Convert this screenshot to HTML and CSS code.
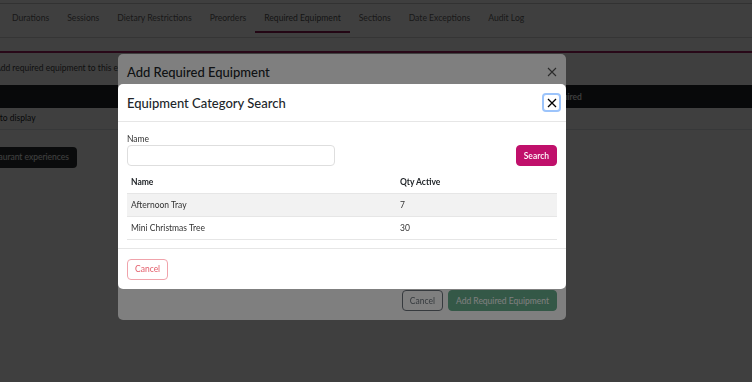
FILE: index.html
```html
<!DOCTYPE html>
<html lang="en">
<head>
  <meta charset="UTF-8" />
  <title>Required Equipment</title>
  <link rel="stylesheet" href="styles.css">
</head>
<body>

  <div class="page">
    <div class="topbar"></div>
    <nav class="tabs">
      <a class="tab">Durations</a>
      <a class="tab">Sessions</a>
      <a class="tab">Dietary Restrictions</a>
      <a class="tab">Preorders</a>
      <a class="tab active">Required Equipment</a>
      <a class="tab">Sections</a>
      <a class="tab">Date Exceptions</a>
      <a class="tab">Audit Log</a>
    </nav>

    <section class="panel">
      <p class="hint">Add required equipment to this event so the kitchen knows what to prepare.</p>
      <table class="list">
        <thead>
          <tr><th class="col-name">Name</th><th class="col-qty">Qty Required</th></tr>
        </thead>
        <tbody>
          <tr><td colspan="2">No data to display</td></tr>
        </tbody>
      </table>
      <button class="btn-dark">Copy from restaurant experiences</button>
    </section>
  </div>

  <!-- First modal -->
  <div class="backdrop"></div>
  <div class="modal modal-add">
    <div class="modal-header">
      <h2>Add Required Equipment</h2>
      <button class="close close-muted">
        <svg width="10" height="10" viewBox="0 0 10 10"><path d="M1 1L9 9M9 1L1 9" stroke="currentColor" stroke-width="1.1"/></svg>
      </button>
    </div>
    <div class="modal-footer">
      <button class="btn btn-outline-secondary">Cancel</button>
      <button class="btn btn-success" disabled>Add Required Equipment</button>
    </div>
  </div>

  <!-- Second modal -->
  <div class="backdrop"></div>
  <div class="modal modal-search">
    <div class="modal-header">
      <h2>Equipment Category Search</h2>
      <button class="close close-focus">
        <svg width="10" height="10" viewBox="0 0 10 10"><path d="M1 1L9 9M9 1L1 9" stroke="currentColor" stroke-width="1.3"/></svg>
      </button>
    </div>
    <div class="modal-body">
      <div class="search-row">
        <label class="field">
          <span>Name</span>
          <input type="text">
        </label>
        <button class="btn btn-primary">Search</button>
      </div>
      <table class="results">
        <thead>
          <tr><th class="col-name">Name</th><th>Qty Active</th></tr>
        </thead>
        <tbody>
          <tr class="striped"><td>Afternoon Tray</td><td>7</td></tr>
          <tr><td>Mini Christmas Tree</td><td>30</td></tr>
        </tbody>
      </table>
    </div>
    <div class="modal-footer left">
      <button class="btn btn-outline-danger">Cancel</button>
    </div>
  </div>

</body>
</html>
```

FILE: styles.css
```css
* {
  margin: 0;
  padding: 0;
  box-sizing: border-box;
}

body {
  font-family: Lato, 'Liberation Sans', sans-serif;
  font-size: 8.5px;
  color: #212529;
  background: #fff;
  overflow: hidden;
}

.page {
  height: 382px;
}

.topbar {
  height: 4px;
  border-bottom: 1px solid #c8c8c8;
}

/* Tabs */
.tabs {
  display: flex;
  padding: 0 0 4px 3px;
  border-bottom: 1px solid #d6d6d6;
}

.tab {
  padding: 0 9px;
  height: 29px;
  line-height: 29px;
  font-size: 8.6px;
  color: #666;
  border-bottom: 2px solid transparent;
}

.tab.active {
  color: #555;
  border-bottom-color: #8c1a52;
}

/* Background panel */
.panel {
  margin-top: 13px;
  margin-left: -100px;
  border-top: 2px solid #a02060;
}

.hint {
  padding: 10px 0 0 95px;
  height: 32px;
  color: #444;
  white-space: nowrap;
}

.list {
  width: 852px;
  border-collapse: collapse;
}

.list th {
  background: #212529;
  color: #fff;
  height: 23px;
  text-align: left;
  font-weight: 600;
}

.list .col-name {
  padding-left: 60px;
  width: 632px;
}

.list td {
  padding-left: 68px;
  height: 21px;
  border-bottom: 1px solid #dee2e6;
}

.btn-dark {
  display: block;
  margin: 17px 0 0 35px;
  height: 21px;
  padding: 0 8px;
  background: #2b2f33;
  color: #fff;
  border: none;
  border-radius: 4px;
  font: inherit;
}

.backdrop {
  position: fixed;
  top: 0; left: 0; right: 0; bottom: 0;
  background: rgba(0, 0, 0, 0.5);
}

/* Modals */
.modal {
  position: fixed;
  left: 118px;
  width: 448px;
  background: #fff;
  border-radius: 5px;
  display: flex;
  flex-direction: column;
}

.modal-add {
  top: 54px;
  height: 266px;
  justify-content: space-between;
}

.modal-search {
  top: 84px;
}

.modal-header {
  display: flex;
  align-items: center;
  justify-content: space-between;
  height: 38px;
  padding: 0 5px 0 9px;
  border-bottom: 1px solid #e6e6e6;
}

.modal-header h2 {
  font-size: 13px;
  font-weight: 500;
  color: #212529;
}

.modal-add .modal-header {
  padding: 0 9px 2px;
}

.close {
  display: flex;
  align-items: center;
  justify-content: center;
  background: none;
  border: none;
  color: #000;
}

.close-muted {
  color: #555;
}

.close-focus {
  width: 19px;
  height: 19px;
  border: 2px solid #9cc4fb;
  border-radius: 4px;
}

.modal-body {
  padding: 12px 9px 8px;
  border-bottom: 1px solid #e6e6e6;
}

.search-row {
  display: flex;
  align-items: flex-end;
  justify-content: space-between;
}

.field {
  display: flex;
  flex-direction: column;
  gap: 1px;
  font-size: 8.5px;
  color: #333;
}

.field input {
  width: 208px;
  height: 21px;
  border: 1px solid #dedede;
  border-radius: 4px;
}

.btn {
  height: 21px;
  padding: 0 7px;
  border-radius: 4px;
  font: inherit;
  background: none;
}

.btn-primary {
  background: #c0106b;
  border: 1px solid #c0106b;
  color: #fff;
  font-weight: 600;
}

.btn-outline-secondary {
  border: 1px solid #6c757d;
  color: #6c757d;
}

.btn-success {
  background: #198754;
  border: 1px solid #198754;
  color: #fff;
  opacity: 0.65;
}

.btn-outline-danger {
  border: 1px solid #f0a3ab;
  color: #e35d6a;
  padding: 0 7px;
}

.results {
  width: 100%;
  margin-top: 5px;
  border-collapse: collapse;
}

.results th {
  height: 22px;
  text-align: left;
  font-weight: 700;
  padding-left: 4px;
  border-bottom: 1px solid #e6e6e6;
}

.results .col-name {
  width: 269px;
}

.results td {
  height: 23px;
  padding-left: 4px;
  color: #333;
  border-bottom: 1px solid #e6e6e6;
}

.results .striped td {
  background: #f2f2f2;
}

.modal-footer {
  display: flex;
  justify-content: flex-end;
  gap: 5px;
  padding: 9px;
}

.modal-footer.left {
  justify-content: flex-start;
  padding: 10px 9px 9px;
}
```
